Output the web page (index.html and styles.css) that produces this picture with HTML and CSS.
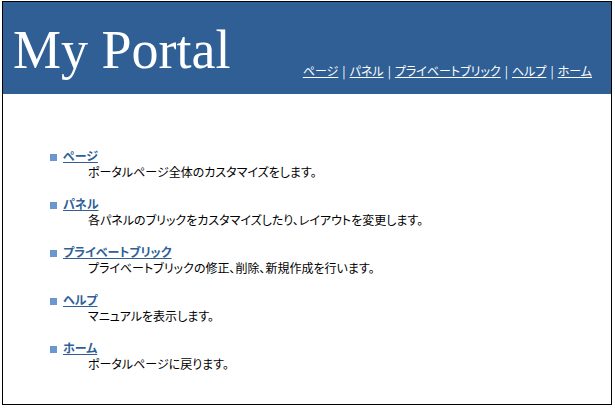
FILE: index.html
```html
<!DOCTYPE html>
<html lang="ja">
<head>
<meta charset="utf-8">
<title>My Portal</title>
<link rel="stylesheet" href="styles.css">
</head>
<body>
<div class="frame">
  <header class="masthead">
    <h1 class="title">My Portal</h1>
    <nav class="topnav">
      <a href="#">ページ</a><span class="sep">|</span><a href="#">パネル</a><span class="sep">|</span><a href="#">プライベートブリック</a><span class="sep">|</span><a href="#">ヘルプ</a><span class="sep">|</span><a href="#">ホーム</a>
    </nav>
  </header>
  <ul class="menu">
    <li class="item"><span class="bullet"></span><div class="body"><a class="link" href="#">ページ</a><p class="desc">ポータルページ全体のカスタマイズをします。</p></div></li>
    <li class="item"><span class="bullet"></span><div class="body"><a class="link" href="#">パネル</a><p class="desc">各パネルのブリックをカスタマイズしたり、レイアウトを変更します。</p></div></li>
    <li class="item"><span class="bullet"></span><div class="body"><a class="link" href="#">プライベートブリック</a><p class="desc">プライベートブリックの修正、削除、新規作成を行います。</p></div></li>
    <li class="item"><span class="bullet"></span><div class="body"><a class="link" href="#">ヘルプ</a><p class="desc">マニュアルを表示します。</p></div></li>
    <li class="item"><span class="bullet"></span><div class="body"><a class="link" href="#">ホーム</a><p class="desc">ポータルページに戻ります。</p></div></li>
  </ul>
</div>
</body>
</html>
```

FILE: styles.css
```css
html, body {
  margin: 0;
  padding: 0;
  background: #ffffff;
}
body {
  font-family: "Noto Sans CJK JP", "Liberation Sans", sans-serif;
  font-size: 12px;
  color: #000000;
  font-feature-settings: "palt" 1;
}
.frame {
  margin: 1px 0 0 2px;
  width: 608px;
  height: 402px;
  border: 1px solid #000000;
  background: #ffffff;
}
.masthead {
  display: flex;
  justify-content: space-between;
  align-items: flex-start;
  height: 92px;
  background: #2f5f95;
}
.title {
  margin: 21px 0 0 10px;
  font-family: "Liberation Serif", serif;
  font-weight: normal;
  font-size: 54px;
  line-height: 54px;
  color: #ffffff;
}
.topnav {
  display: flex;
  margin: 61px 19px 0 0;
  line-height: 16px;
  font-size: 12px;
  color: #ffffff;
  white-space: nowrap;
}
.topnav a {
  color: #ffffff;
  text-decoration: underline;
}
.sep {
  padding: 0 4px;
}
.menu {
  list-style: none;
  margin: 55px 0 0 0;
  padding: 0 0 0 47px;
}
.item {
  display: flex;
  align-items: flex-start;
  margin-bottom: 18px;
}
.bullet {
  width: 7px;
  height: 7px;
  margin: 5px 6px 0 0;
  background: #6a97cf;
  flex: none;
}
.body {
  line-height: 14px;
}
.link {
  font-weight: bold;
  color: #2f5f95;
  text-decoration: underline;
}
.desc {
  margin: 2px 0 0 0;
  padding-left: 25px;
}
```
